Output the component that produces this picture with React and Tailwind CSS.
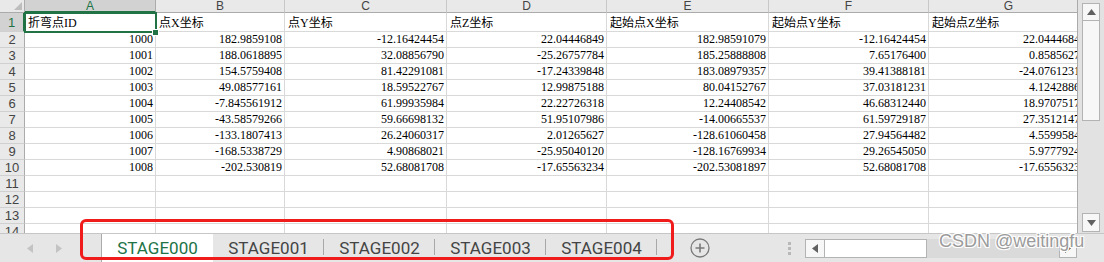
import React from "react";

const colW = ["w-[131px]", "w-[129px]", "w-[162px]", "w-[160px]", "w-[162px]", "w-[160px]", "w-[160px]"];
const letters = ["A", "B", "C", "D", "E", "F", "G"];
const headerRow = ["折弯点ID", "点X坐标", "点Y坐标", "点Z坐标", "起始点X坐标", "起始点Y坐标", "起始点Z坐标"];
const data = [
  ["1000", "182.9859108", "-12.16424454", "22.04446849", "182.98591079", "-12.16424454", "22.04446849"],
  ["1001", "188.0618895", "32.08856790", "-25.26757784", "185.25888808", "7.65176400", "0.85856270"],
  ["1002", "154.5759408", "81.42291081", "-17.24339848", "183.08979357", "39.41388181", "-24.07612310"],
  ["1003", "49.08577161", "18.59522767", "12.99875188", "80.04152767", "37.03181231", "4.12428860"],
  ["1004", "-7.845561912", "61.99935984", "22.22726318", "12.24408542", "46.68312440", "18.97075170"],
  ["1005", "-43.58579266", "59.66698132", "51.95107986", "-14.00665537", "61.59729187", "27.35121470"],
  ["1006", "-133.1807413", "26.24060317", "2.01265627", "-128.61060458", "27.94564482", "4.55995840"],
  ["1007", "-168.5338729", "4.90868021", "-25.95040120", "-128.16769934", "29.26545050", "5.97779240"],
  ["1008", "-202.530819", "52.68081708", "-17.65563234", "-202.53081897", "52.68081708", "-17.65563234"],
];

const cellFont = { fontFamily: '"Liberation Serif", "Noto Sans CJK SC", serif' };

function RowHeader({ n, active, h }) {
  return (
    <div
      className={`w-[25px] shrink-0 ${h} flex items-center justify-center text-[13px] leading-none border-b border-[#d0d0d0] ${
        active ? "bg-[#d2d2d2] text-[#217346] border-r-2 border-r-[#217346]" : "bg-[#e9e9e9] text-[#444] border-r border-r-[#ababab]"
      }`}
      style={{ fontFamily: '"Liberation Sans", Arial, sans-serif' }}
    >
      {n}
    </div>
  );
}

function GridRow({ n, cells, h, align, active }) {
  return (
    <div className="flex">
      <RowHeader n={n} active={active} h={h} />
      {colW.map((w, i) => (
        <div
          key={i}
          className={`${w} shrink-0 ${h} border-r border-b border-[#d9d9d9] flex items-end pb-[1px] text-[12px] leading-[14px] text-black whitespace-nowrap overflow-hidden ${
            align === "left" ? "justify-start pl-[3px]" : "justify-end pr-[2px]"
          }`}
          style={cellFont}
        >
          {cells ? cells[i] : ""}
        </div>
      ))}
    </div>
  );
}

function Tri({ dir, color = "#c3c3c3", size = 9 }) {
  const pts = {
    left: "6,0 6,9 0,4.5",
    right: "0,0 0,9 6,4.5",
    up: "0,6 9,6 4.5,0",
    down: "0,0 9,0 4.5,6",
  }[dir];
  const vb = dir === "left" || dir === "right" ? "0 0 6 9" : "0 0 9 6";
  const w = dir === "left" || dir === "right" ? 6 : size;
  const hh = dir === "left" || dir === "right" ? 9 : 6;
  return (
    <svg width={w} height={hh} viewBox={vb}>
      <polygon points={pts} fill={color} />
    </svg>
  );
}

function Tab({ label, active }) {
  return (
    <div
      className={`w-[111px] shrink-0 h-full flex items-center justify-center relative ${
        active ? "bg-white text-[#217346]" : "text-[#444]"
      }`}
    >
      <span className="text-[17px] leading-none" style={{ fontFamily: "Roboto, sans-serif" }}>
        {label}
      </span>
      {!active && <div className="absolute right-0 top-[5px] h-[16px] w-px bg-[#a8a8a8]" />}
    </div>
  );
}

export default function App() {
  return (
    <div className="w-[1104px] h-[262px] bg-white overflow-hidden relative flex flex-col">
      <div className="flex h-[233px] shrink-0">
        {/* grid */}
        <div className="w-[1078px] h-full overflow-hidden relative border-r border-[#ababab]">
          {/* column headers */}
          <div className="flex h-[13px]">
            <div className="w-[25px] shrink-0 h-full bg-[#e9e9e9] border-r border-b border-[#ababab] relative">
              <svg className="absolute right-[2px] bottom-[2px]" width="8" height="8" viewBox="0 0 8 8">
                <polygon points="8,0 8,8 0,8" fill="#bdbdbd" />
              </svg>
            </div>
            {colW.map((w, i) => (
              <div
                key={i}
                className={`${w} shrink-0 h-full flex items-center justify-center text-[12px] leading-[12px] border-r ${
                  i === 0
                    ? "bg-[#d2d2d2] text-[#217346] border-b-2 border-b-[#217346] border-r-[#ababab]"
                    : "bg-[#e9e9e9] text-[#444] border-b border-b-[#ababab] border-r-[#c8c8c8]"
                }`}
                style={{ fontFamily: '"Liberation Sans", Arial, sans-serif' }}
              >
                {letters[i]}
              </div>
            ))}
          </div>
          <GridRow n={1} cells={headerRow} h="h-[19px]" align="left" active />
          {data.map((r, i) => (
            <GridRow key={i} n={i + 2} cells={r} h="h-[16px]" />
          ))}
          {[11, 12, 13, 14].map((n) => (
            <GridRow key={n} n={n} h="h-[16px]" />
          ))}
          {/* selection */}
          <div className="absolute left-[24px] top-[12px] w-[133px] h-[21px] border-2 border-[#217346]" />
          <div className="absolute left-[152px] top-[29px] w-[7px] h-[7px] bg-[#217346] border border-white" />
        </div>
        {/* vertical scrollbar */}
        <div className="w-[26px] h-full bg-[#e2e2e2] flex flex-col items-center pt-[3px] pb-[1px]">
          <div className="w-[18px] h-[18px] bg-[#f7f7f7] border border-[#b3b3b3] flex items-center justify-center">
            <Tri dir="up" color="#606060" />
          </div>
          <div className="w-[18px] h-[100px] bg-[#f7f7f7] border-x border-b border-[#b3b3b3]" />
          <div className="flex-1" />
          <div className="w-[18px] h-[19px] bg-[#f7f7f7] border border-[#b3b3b3] flex items-center justify-center">
            <Tri dir="down" color="#606060" />
          </div>
        </div>
      </div>
      {/* sheet tab bar */}
      <div className="flex-1 flex bg-[#e6e6e6] border-t border-[#c6c6c6] items-stretch">
        <div className="w-[102px] shrink-0 flex items-center pl-[27px] gap-[23px] border-r border-[#ababab]">
          <Tri dir="left" />
          <Tri dir="right" />
        </div>
        <Tab label="STAGE000" active />
        <Tab label="STAGE001" />
        <Tab label="STAGE002" />
        <Tab label="STAGE003" />
        <Tab label="STAGE004" />
        <div className="w-[33px] shrink-0" />
        <div className="flex items-center">
          <svg width="20" height="20" viewBox="0 0 20 20">
            <circle cx="10" cy="10" r="9" fill="none" stroke="#7a7a7a" strokeWidth="1.3" />
            <path d="M10 5.5v9M5.5 10h9" stroke="#7a7a7a" strokeWidth="1.6" />
          </svg>
        </div>
        <div className="w-[95px] shrink-0 flex items-center justify-end pr-[14px]">
          <div className="flex flex-col gap-[2px]">
            <div className="w-[3px] h-[3px] bg-[#b8b8b8]" />
            <div className="w-[3px] h-[3px] bg-[#b8b8b8]" />
            <div className="w-[3px] h-[3px] bg-[#b8b8b8]" />
          </div>
        </div>
        <div className="flex items-center">
          <div className="flex h-[19px] w-[272px]">
            <div className="w-[20px] h-full bg-[#f7f7f7] border border-[#b3b3b3] flex items-center justify-center">
              <Tri dir="left" color="#606060" />
            </div>
            <div className="w-[102px] h-full bg-white border-y border-r border-[#b3b3b3]" />
            <div className="flex-1 h-full bg-[#dadada]" />
            <div className="w-[18px] h-full bg-[#f7f7f7] border border-[#b3b3b3] flex items-center justify-center">
              <Tri dir="right" color="#606060" />
            </div>
          </div>
        </div>
      </div>
      {/* red annotation box */}
      <div className="absolute left-[80px] top-[219px] w-[594px] h-[41px] border-[3px] border-[#f01c1c] rounded-[6px]" />
      {/* watermark */}
      <div
        className="absolute left-[939px] top-[232px] text-[18px] leading-none text-[#9b9b9b]"
        style={{
          fontFamily: '"Liberation Sans", Arial, sans-serif',
          textShadow: "1px 1px 0 #fff, -1px -1px 0 #fff, 1px -1px 0 #fff, -1px 1px 0 #fff",
        }}
      >
        CSDN @weitingfu
      </div>
    </div>
  );
}
